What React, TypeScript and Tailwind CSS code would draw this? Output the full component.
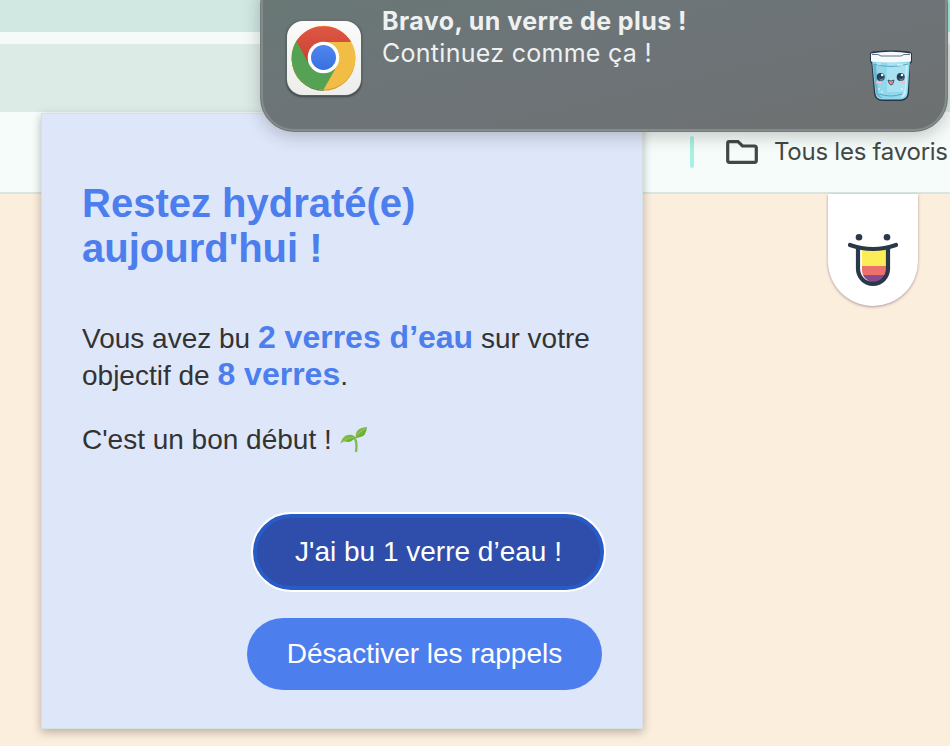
function ChromeLogo() {
  return (
    <svg className="block h-[75px] w-[75px]" viewBox="0 0 75 75">
      <defs>
        <linearGradient id="tile" x1="0" y1="0" x2="0" y2="1">
          <stop offset="0" stopColor="#fbfbfb" />
          <stop offset="1" stopColor="#ededeb" />
        </linearGradient>
        <linearGradient id="red" x1="0" y1="0" x2="0" y2="1">
          <stop offset="0" stopColor="#df5845" />
          <stop offset="1" stopColor="#c84032" />
        </linearGradient>
        <linearGradient id="blue" x1="0" y1="0" x2="0" y2="1">
          <stop offset="0" stopColor="#4f87ee" />
          <stop offset="1" stopColor="#3871e0" />
        </linearGradient>
      </defs>
      <rect x="0.5" y="0.5" width="74" height="74" rx="16" fill="url(#tile)" />
      <circle cx="37" cy="38.5" r="31.8" fill="#d5962f" />
      <path d="M5.2 38.5 A31.8 31.8 0 0 0 37 70.3 V39 Z" fill="#47894a" />
      <circle cx="37" cy="37.3" r="32" fill="#f2bd45" />
      <path d="M37 37.3 L10 20.3 A32 32 0 0 0 37 69.3 L48.5 49 Z" fill="#55a254" />
      <path d="M10 20.6 A32 32 0 0 1 64.7 21.5 H37 L21.5 42 Z" fill="url(#red)" />
      <circle cx="37" cy="37" r="15.8" fill="#fff" />
      <circle cx="37" cy="37" r="12.5" fill="url(#blue)" />
    </svg>
  );
}

function WaterGlass() {
  return (
    <svg className="block h-[52px] w-[44px]" viewBox="0 0 44 52">
      <path d="M1 3 L4 1.5 L16 0.5 H28 L40 1.5 L43 3 V12 L41 14 L40 44 Q39 50 32 51 H13 Q6 50 5 44 L2.5 14 L1 11 Z" fill="#25364b" />
      <path d="M3 10 H41 L38.7 43 Q38 49 31 49.5 H13 Q7 49 6.3 43 Z" fill="#92d8ea" />
      <path d="M18 13 H38.5 L37 42 H18 Z" fill="#a9e2f0" />
      <path d="M4 14 H7 L9 43 Q10 46 14 48 Q8 48 7 43 Z" fill="#69b5d0" />
      <path d="M39 15 L37 43 Q36 47 31 48 Q35 44 36 38 L37 15 Z" fill="#c7f1f8" />
      <path d="M2 3.5 Q22 0 42 3.5 V11.5 Q22 13.5 2 11.5 Z" fill="#f5fafc" />
      <path d="M3 4.5 H9 L12 6 H32 L35 4.5 H41" fill="none" stroke="#65727f" strokeWidth="1" />
      <path d="M5 14 Q22 19 39 14 M10 44 Q22 48 33 44" fill="none" stroke="#56a9c7" strokeWidth="1" />
      <path d="M8 14 h4 M28 15 h6 M9 39 h2 M12 42 h2 M32 39 h2" stroke="#eafbff" strokeWidth="1.2" />
      <circle cx="11.7" cy="27" r="4" fill="#263d57" />
      <circle cx="31.7" cy="27" r="4" fill="#263d57" />
      <path d="M9 27 Q12 31 15 27 Q14 32 11.7 31 Z M29 27 Q32 31 35 27 Q34 32 31.7 31 Z" fill="#657f99" />
      <circle cx="13.2" cy="25" r="1.3" fill="#fff" />
      <circle cx="33" cy="25" r="1.3" fill="#fff" />
      <path d="M19 30 Q22 32 25 30 Q24.5 35 22 35 Q19.5 34 19 30 Z" fill="#ee8797" stroke="#304058" strokeWidth="0.8" />
      <path d="M7 32.5 h5 M31.5 32.5 h5" stroke="#f5bdd0" strokeWidth="2.2" />
    </svg>
  );
}

function Sprout() {
  return (
    <svg className="ml-[8px] block h-[28px] w-[28px]" viewBox="0 0 28 28">
      <defs>
        <linearGradient id="leaf" x1="0" y1="0" x2="1" y2="1">
          <stop offset="0" stopColor="#92c850" />
          <stop offset="1" stopColor="#57a129" />
        </linearGradient>
      </defs>
      <path d="M9 11.5 Q15.5 10 16.3 17 Q16.8 21 16 26" fill="none" stroke="#7dbd49" strokeWidth="2.3" />
      <path d="M14.8 11.5 Q18 12 20 9" fill="none" stroke="#7dbd49" strokeWidth="1.8" />
      <path d="M0.5 17.8 Q2.5 8.5 10 8.8 Q14 9 15 11.5 Q11 17 6.5 15.8 Q3 15 0.5 17.8 Z" fill="url(#leaf)" />
      <path d="M15.5 10 Q15.5 1.5 27 1 Q26 12 18 11.2 Q16.3 11 15.5 10 Z" fill="url(#leaf)" />
      <path d="M2.5 15.2 Q7 12.5 13.5 11.3 M17 9.5 Q20 5 25.5 2.2" fill="none" stroke="#a5d768" strokeWidth="0.7" />
    </svg>
  );
}

function TongueFace() {
  return (
    <svg className="block h-[56px] w-[52px] overflow-visible" viewBox="-1 0 52 56">
      <defs>
        <clipPath id="tongue">
          <path d="M14 12 H39 V33 A12.5 12.5 0 0 1 14 33 Z" />
        </clipPath>
      </defs>
      <path d="M10 12 H40 V32 A15 15 0 0 1 10 32 Z" fill="#fff" />
      <g clipPath="url(#tongue)">
        <rect x="14" y="10" width="25" height="19" fill="#faed55" />
        <rect x="14" y="29" width="25" height="9" fill="#ec706c" />
        <rect x="14" y="38" width="25" height="12" fill="#884b8c" />
      </g>
      <path d="M10 11 V31.8 A15 15 0 0 0 40 31.8 V11" fill="none" stroke="#29394a" strokeWidth="4.2" />
      <path d="M2 8 Q25 16 48 8" fill="none" stroke="#29394a" strokeWidth="4.2" strokeLinecap="round" />
      <circle cx="11" cy="0.3" r="3.3" fill="#29394a" />
      <circle cx="39" cy="0.3" r="3.3" fill="#29394a" />
    </svg>
  );
}

function Notification() {
  return (
    <div className="absolute top-[-30px] left-[260px] flex h-[162px] w-[688px] rounded-[34px] border border-[#747b7b] bg-linear-to-br from-[#687875] via-[#6d7478] to-[#6d7070] pt-[49px] pl-[25px] font-['Inter','Liberation_Sans',sans-serif] text-[#eff1f1] shadow-[0_4px_18px_rgba(0,0,0,0.22),inset_0_0_0_2px_#858a8b]">
      <div className="h-[75px] w-[75px] translate-x-[0.5px] translate-y-[0.5px] rounded-[16px] shadow-[0_1px_2px_rgba(0,0,0,0.4)]">
        <ChromeLogo />
      </div>
      <div className="mt-[-15px] ml-[21px] w-[487px] whitespace-nowrap">
        <div className="text-[25px] leading-[32px] font-bold tracking-[0.43px]">Bravo, un verre de plus !</div>
        <div className="text-[25px] leading-[32px] tracking-[0.28px]">Continuez comme ça !</div>
      </div>
      <div className="mt-[30px]">
        <WaterGlass />
      </div>
    </div>
  );
}

function Popup() {
  return (
    <div className="absolute top-[113px] left-[41px] flex h-[616px] w-[602px] flex-col bg-[#dee7fa] px-[41px] pt-[68px] whitespace-nowrap text-[#333] shadow-[0_3px_9px_rgba(0,0,0,0.28),inset_0_0_0_1px_#d6e0de]">
      <h1 className="text-[40px] leading-[45px] font-bold text-[#4c7eed]">
        Restez hydraté(e)
        <br />
        aujourd'hui !
      </h1>
      <p className="mt-[49px] text-[28px] leading-[37px]">
        Vous avez bu <b className="text-[32px] leading-none text-[#4c7eed]">2 verres d’eau</b> sur votre
        <br />
        objectif de <b className="text-[32px] leading-none text-[#4c7eed]">8 verres</b>.
      </p>
      <p className="mt-[27px] flex h-[37px] items-center text-[28px] leading-[37px]">
        <span>C'est un bon début !</span>
        <Sprout />
      </p>
      <div className="mt-[54px] mr-[-4px] flex flex-col items-end">
        <button className="h-[80px] w-[355px] rounded-full border-2 border-white bg-[#2f4dab] text-[28px] text-white shadow-[inset_0_0_0_4px_#275cc7]">
          J'ai bu 1 verre d’eau !
        </button>
        <button className="mt-[26px] mr-[4px] h-[72px] w-[355px] rounded-full bg-[#4c7eed] text-[28px] text-white">
          Désactiver les rappels
        </button>
      </div>
    </div>
  );
}

export default function App() {
  return (
    <div className="relative flex h-[746px] w-[950px] flex-col overflow-hidden bg-[#fceedd] font-['Liberation_Sans',Arial,sans-serif]">
      <div className="flex h-8 justify-end bg-[#d1e7e2]">
        <div className="w-10 bg-[#a9ede2]" />
      </div>
      <div className="h-3 bg-[#f5fbf9]" />
      <div className="h-[68px] bg-[#ddebe7]" />
      <div className="flex h-[82px] items-start border-b-2 border-[#dae4e1] bg-[#f5fcf9] pt-6 pl-[690px] font-['Inter','Liberation_Sans',sans-serif]">
        <div className="h-8 w-1 shrink-0 rounded-full bg-[#a8f0e3]" />
        <svg className="mt-[4px] ml-[32px] h-[24px] w-[32px] shrink-0" viewBox="0 0 32 24">
          <path d="M3 1.7 H12 L16.5 6 H28.5 Q30.3 6 30.3 8 V20.5 Q30.3 22.3 28.5 22.3 H3.5 Q1.7 22.3 1.7 20.5 V3.5 Q1.7 1.7 3 1.7 Z" fill="none" stroke="#424846" strokeWidth="3.2" />
        </svg>
        <span className="ml-[16px] text-[24px] leading-[32px] tracking-[-0.25px] whitespace-nowrap text-[#424846]">Tous les favoris</span>
      </div>
      <div className="flex justify-end pr-8">
        <div className="flex h-[112px] w-[90px] justify-center rounded-b-[45px] bg-white pt-[43px] shadow-[0_1px_3px_rgba(60,20,60,0.4)]">
          <TongueFace />
        </div>
      </div>
      <Popup />
      <Notification />
    </div>
  );
}
